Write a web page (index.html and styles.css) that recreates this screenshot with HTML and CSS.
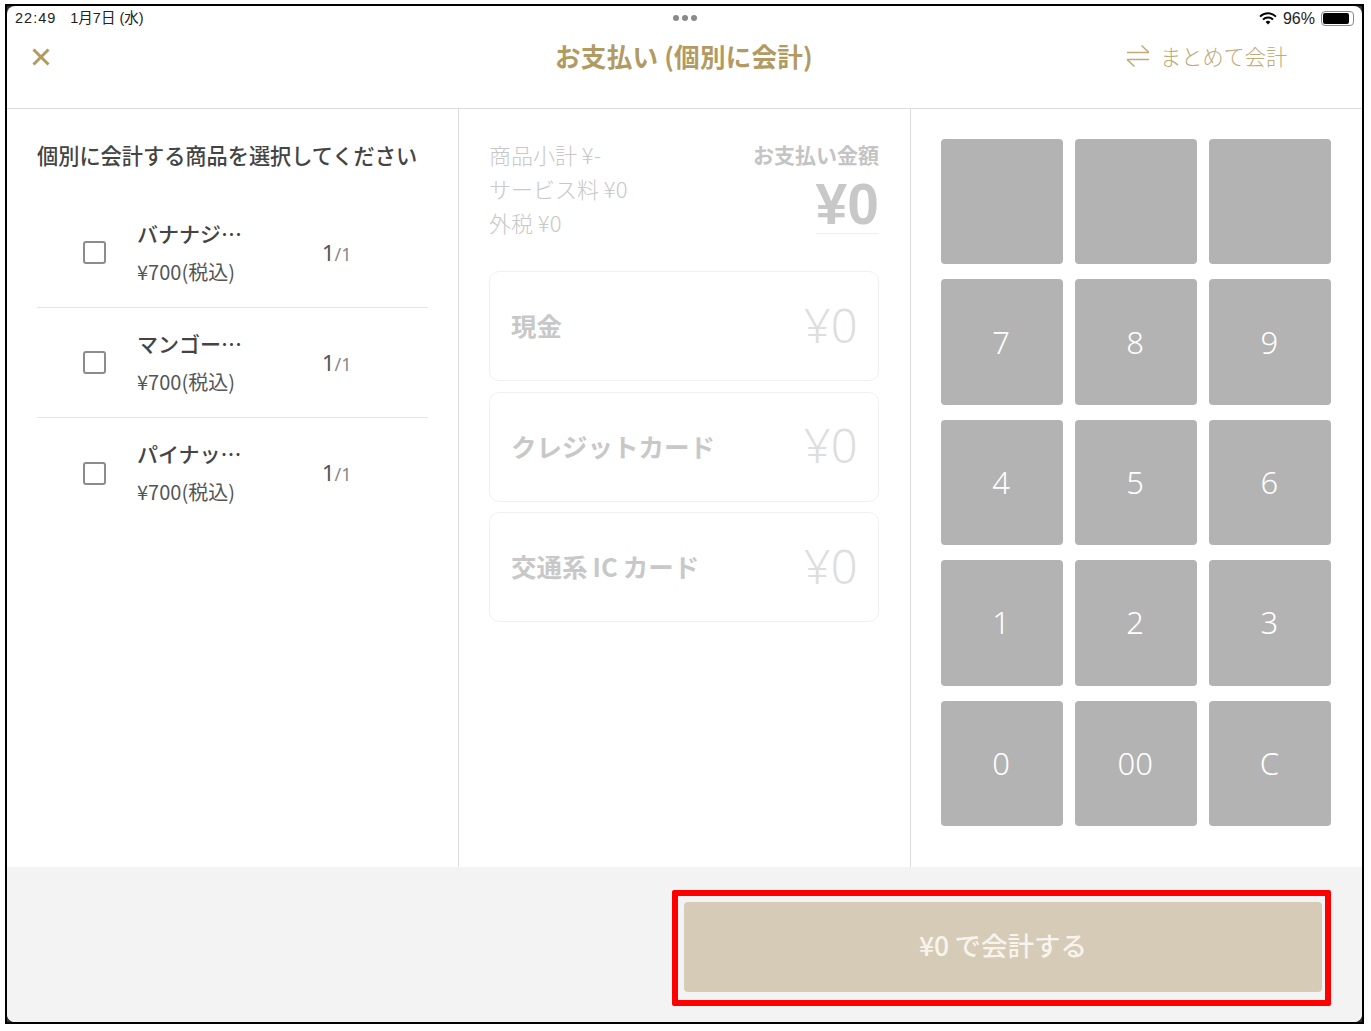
FILE: index.html
```html
<!DOCTYPE html>
<html lang="ja">
<head>
  <meta charset="UTF-8">
  <title>お支払い (個別に会計)</title>
  <link rel="stylesheet" href="styles.css">
</head>
<body>
  <div class="device">
    <div class="screen">
      <header class="header">
        <div class="status-bar">
          <span class="status-time"><span class="clock">22:49</span><span>1月7日 (水)</span></span>
          <span class="status-dots"><i></i><i></i><i></i></span>
          <span class="status-right">
            <svg class="wifi" width="18" height="13" viewBox="0 0 18 13">
              <path d="M1 4.6a11.4 11.4 0 0 1 16 0" fill="none" stroke="#000" stroke-width="2"/>
              <path d="M4 7.6a7.2 7.2 0 0 1 10 0" fill="none" stroke="#000" stroke-width="2"/>
              <path d="M6.6 10a3.4 3.4 0 0 1 4.8 0L9 12.6z" fill="#000"/>
            </svg>
            <span>96%</span>
            <span class="battery"><span class="battery-fill"></span></span>
          </span>
        </div>
        <div class="title-row">
          <svg class="close-icon" width="20" height="20" viewBox="0 0 20 20">
            <path d="M2.5 2.5l15 15M17.5 2.5l-15 15" fill="none" stroke="#b29a63" stroke-width="3"/>
          </svg>
          <h1 class="title">お支払い (個別に会計)</h1>
          <div class="switch-mode">
            <svg width="24" height="24" viewBox="0 0 24 24">
              <path d="M1 8.5h22M15.5 1.5l7.5 7M23 15.5H1M8.5 22.5L1 15.5" fill="none" stroke="#c0aa78" stroke-width="1.5"/>
            </svg>
            <span>まとめて会計</span>
          </div>
        </div>
      </header>

      <main class="columns">
        <section class="col col-items">
          <h2 class="items-title">個別に会計する商品を選択してください</h2>
          <div class="item">
            <span class="check"></span>
            <div class="item-info">
              <div class="item-name">バナナジ…</div>
              <div class="item-price">¥700(税込)</div>
            </div>
            <div class="item-qty">1<small>/1</small></div>
          </div>
          <div class="item">
            <span class="check"></span>
            <div class="item-info">
              <div class="item-name">マンゴー…</div>
              <div class="item-price">¥700(税込)</div>
            </div>
            <div class="item-qty">1<small>/1</small></div>
          </div>
          <div class="item">
            <span class="check"></span>
            <div class="item-info">
              <div class="item-name">パイナッ…</div>
              <div class="item-price">¥700(税込)</div>
            </div>
            <div class="item-qty">1<small>/1</small></div>
          </div>
        </section>

        <section class="col col-pay">
          <div class="summary">
            <div class="summary-lines">
              <div>商品小計 ¥-</div>
              <div>サービス料 ¥0</div>
              <div>外税 ¥0</div>
            </div>
            <div class="total">
              <div class="total-label">お支払い金額</div>
              <div class="total-value">¥0</div>
            </div>
          </div>
          <div class="method"><span>現金</span><span class="method-value">¥0</span></div>
          <div class="method"><span>クレジットカード</span><span class="method-value">¥0</span></div>
          <div class="method"><span>交通系&#8201;IC&#8201;カード</span><span class="method-value">¥0</span></div>
        </section>

        <section class="col col-keys">
          <div class="keypad">
            <div class="key"></div>
            <div class="key"></div>
            <div class="key"></div>
            <div class="key">7</div>
            <div class="key">8</div>
            <div class="key">9</div>
            <div class="key">4</div>
            <div class="key">5</div>
            <div class="key">6</div>
            <div class="key">1</div>
            <div class="key">2</div>
            <div class="key">3</div>
            <div class="key">0</div>
            <div class="key">00</div>
            <div class="key">C</div>
          </div>
        </section>
      </main>

      <footer class="footer">
        <div class="pay-button">¥0&#8201;で会計する</div>
        <div class="highlight"></div>
      </footer>
    </div>
  </div>
</body>
</html>
```

FILE: styles.css
```css
* {
  box-sizing: border-box;
}
html, body {
  margin: 0;
  background: #fff;
}
body {
  padding: 4px 0 0 5px;
  height: 1031px;
  overflow: hidden;
  font-family: "Noto Sans CJK JP", "Noto Sans", sans-serif;
}
.device {
  width: 1359px;
  height: 1020px;
  border: 2px solid #000;
  background: #333;
}
.screen {
  height: 100%;
  border-radius: 8px;
  overflow: hidden;
  display: flex;
  flex-direction: column;
  background: #fff;
}
.header {
  height: 103px;
  border-bottom: 1px solid #dcdcdc;
  flex: none;
}
.status-bar {
  height: 25px;
  padding: 0 8px 1px 8px;
  display: flex;
  align-items: center;
  justify-content: space-between;
  font-family: "Liberation Sans", "Noto Sans CJK JP", sans-serif;
  font-size: 15px;
  color: #222;
}
.status-time {
  width: 300px;
  display: flex;
  align-items: baseline;
  gap: 14px;
  font-size: 14.5px;
  padding-bottom: 3px;
}
.clock {
  letter-spacing: 1px;
}
.status-dots {
  display: flex;
  gap: 3px;
}
.status-dots i {
  width: 6px;
  height: 6px;
  border-radius: 50%;
  background: #8a8a8a;
}
.status-right {
  width: 300px;
  display: flex;
  justify-content: flex-end;
  align-items: center;
  gap: 6px;
  font-size: 16px;
  padding-top: 1px;
}
.battery {
  width: 33px;
  height: 15px;
  border: 1px solid #888;
  border-radius: 4px;
  padding: 1px;
  display: block;
}
.battery-fill {
  display: block;
  height: 100%;
  width: 26px;
  background: #000;
  border-radius: 2px;
}
.title-row {
  height: 52px;
  margin-top: -1px;
  display: flex;
  align-items: center;
  position: relative;
  padding-left: 24px;
}
.close-icon {
  flex: none;
  margin-top: 2px;
}
.title {
  margin: 0;
  flex: 1;
  text-align: center;
  font-size: 25.6px;
  font-weight: 700;
  color: #b29a63;
  padding: 0 45px 2px 0;
  letter-spacing: 0.2px;
}
.switch-mode {
  position: absolute;
  left: 1119px;
  top: 10px;
  display: flex;
  align-items: center;
  gap: 10px;
  font-size: 21.2px;
  font-weight: 300;
  color: #c0aa78;
  white-space: nowrap;
}
.columns {
  height: 758px;
  flex: none;
  display: grid;
  grid-template-columns: 452px 452px 1fr;
}
.col {
  border-right: 1px solid #dcdcdc;
}
.col-keys {
  border-right: none;
}
.col-items {
  padding: 30px 30px 0 30px;
}
.items-title {
  margin: 0 0 27px;
  font-size: 21.2px;
  line-height: 32px;
  font-weight: 500;
  color: #444;
  white-space: nowrap;
}
.item {
  height: 110px;
  display: flex;
  align-items: center;
  border-bottom: 1px solid #e4e4e4;
}
.item:last-child {
  border-bottom: none;
}
.check {
  width: 23px;
  height: 23px;
  margin-left: 46px;
  border: 2.5px solid #8c8c8c;
  border-radius: 3px;
  flex: none;
}
.item-info {
  width: 185px;
  margin-left: 31px;
  padding-bottom: 2px;
}
.item-name {
  font-size: 21px;
  font-weight: 500;
  line-height: 30px;
  color: #444;
}
.item-price {
  font-size: 20px;
  line-height: 28px;
  margin-top: 10px;
  color: #555;
}
.item-qty {
  font-family: "Noto Sans", sans-serif;
  font-size: 22px;
  color: #555;
  padding-bottom: 2px;
}
.item-qty small {
  font-size: 18px;
  color: #888;
}
.col-pay {
  padding: 28px 31px 0 30px;
}
.summary {
  display: flex;
  justify-content: space-between;
  height: 134px;
}
.summary-lines {
  font-size: 22px;
  font-weight: 300;
  line-height: 34px;
  color: #c8c8c8;
}
.total {
  text-align: right;
}
.total-label {
  font-size: 21px;
  font-weight: 700;
  line-height: 34px;
  color: #c4c4c4;
}
.total-value {
  display: inline-block;
  font-family: "Liberation Sans", sans-serif;
  font-size: 57px;
  font-weight: 700;
  line-height: 58px;
  color: #c8c8c8;
  border-bottom: 1px solid #eee;
  padding-top: 4px;
}
.method {
  height: 110px;
  margin-bottom: 10.5px;
  padding: 0 20.5px 3px 21px;
  border: 1px solid #f0f0f0;
  border-radius: 10px;
  display: flex;
  align-items: center;
  justify-content: space-between;
  font-size: 25.5px;
  font-weight: 700;
  color: #c8c8c8;
}
.method-value {
  font-family: "Noto Sans", sans-serif;
  font-size: 47px;
  font-weight: 300;
  color: #dedede;
}
.col-keys {
  padding: 30px 31px 0 30px;
}
.keypad {
  display: grid;
  grid-template-columns: repeat(3, 122px);
  grid-auto-rows: 125.4px;
  column-gap: 12.2px;
  row-gap: 15px;
}
.key {
  background: #b3b3b3;
  border-radius: 4px;
  padding: 0 2px 1px 0;
  display: flex;
  align-items: center;
  justify-content: center;
  font-family: "Noto Sans", sans-serif;
  font-size: 31px;
  font-weight: 300;
  color: #fff;
}
.footer {
  flex: 1;
  background: #f3f3f3;
  display: flex;
  justify-content: flex-end;
  padding: 35px 40px 0 0;
  position: relative;
}
.pay-button {
  width: 638px;
  height: 90px;
  padding-bottom: 5px;
  background: #d6cbb6;
  border-radius: 4px;
  display: flex;
  align-items: center;
  justify-content: center;
  font-size: 26.5px;
  font-weight: 500;
  color: #f7f4ee;
}
.highlight {
  position: absolute;
  left: 665px;
  top: 23px;
  width: 659px;
  height: 116px;
  border: 6px solid #f00;
  border-radius: 2px;
}
```
